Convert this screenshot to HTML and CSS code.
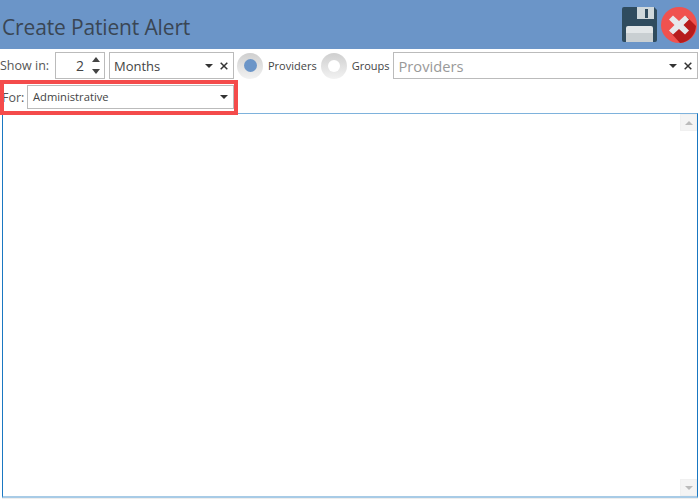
FILE: index.html
```html
<!DOCTYPE html>
<html lang="en">
<head>
<meta charset="utf-8">
<title>Create Patient Alert</title>
<link rel="stylesheet" href="styles.css">
</head>
<body>
<div class="app">
  <header class="header">
    <h1 class="title">Create Patient Alert</h1>
    <div class="actions">
      <svg class="save" width="35" height="35" viewBox="0 0 35 35">
        <path d="M2 0H32L35 3V33a2 2 0 0 1-2 2H2a2 2 0 0 1-2-2V2a2 2 0 0 1 2-2Z" fill="#2f4b5e"/>
        <path d="M15 0H32V12H15Z" fill="#cfd8dc"/>
        <rect x="23" y="2" width="3" height="9" fill="#2f4b5e"/>
        <path d="M4 21a2 2 0 0 1 2-2H29a2 2 0 0 1 2 2V35H4Z" fill="#e2e6e8"/>
        <rect x="4" y="26" width="27" height="9" fill="#c9cfd2"/>
      </svg>
      <svg class="close" width="36" height="36" viewBox="0 0 36 36">
        <circle cx="18" cy="18" r="18" fill="#f0524f"/>
        <path d="M10 26 L26 10 L35 19 A18 18 0 0 1 19 35.9Z" fill="#b71c1c"/>
        <path d="M12 8.5 L18 14 L24 8.5 L28 12.5 L22.5 18 L28 23.5 L24 27.5 L18 22 L12 27.5 L8 23.5 L13.5 18 L8 12.5Z" fill="#e6e9ec"/>
      </svg>
    </div>
  </header>

  <div class="row row-show">
    <span class="label">Show in:</span>
    <div class="field spinner">
      <span class="spin-value">2</span>
      <span class="spin-arrows">
        <svg width="8" height="5" viewBox="0 0 8 5"><path d="M4 0 8 5H0Z" fill="#444"/></svg>
        <svg width="8" height="5" viewBox="0 0 8 5"><path d="M0 0H8L4 5Z" fill="#444"/></svg>
      </span>
    </div>
    <div class="field combo months">
      <span class="combo-text">Months</span>
      <span class="caret"></span>
      <svg class="clear" width="8" height="8" viewBox="0 0 8 8"><path d="M.7.7 7.3 7.3M7.3.7.7 7.3" stroke="#333" stroke-width="1.5"/></svg>
    </div>
    <span class="radio radio-on"><span class="radio-dot"></span></span>
    <span class="radio-label">Providers</span>
    <span class="radio radio-off"><span class="radio-dot"></span></span>
    <span class="radio-label">Groups</span>
    <div class="field combo providers">
      <span class="combo-text placeholder">Providers</span>
      <span class="caret"></span>
      <svg class="clear" width="8" height="8" viewBox="0 0 8 8"><path d="M.7.7 7.3 7.3M7.3.7.7 7.3" stroke="#333" stroke-width="1.5"/></svg>
    </div>
  </div>

  <div class="row row-for">
    <span class="label">For:</span>
    <div class="field combo for">
      <span class="combo-text small">Administrative</span>
      <span class="caret"></span>
    </div>
    <span class="highlight"></span>
  </div>

  <div class="editor">
    <div class="scrollbar">
      <span class="scroll-btn"><span class="arrow-up"></span></span>
      <span class="scroll-btn"><span class="arrow-down"></span></span>
    </div>
  </div>
</div>
</body>
</html>
```

FILE: styles.css
```css
* { box-sizing: border-box; }
html, body { margin: 0; height: 100%; }
body { background: #fff; font-family: "Open Sans", "Liberation Sans", sans-serif; color: #444; overflow: hidden; }
.app { width: 699px; height: 500px; display: flex; flex-direction: column; background: #fff; }

.header { height: 49px; flex: none; background: #6b95c8; display: flex; align-items: center; justify-content: space-between; }
.title { margin: 4px 0 0 2px; font-family: "Open Sans", sans-serif; font-weight: 400; font-size: 21px; color: #3a4654; letter-spacing: -.15px; }
.actions { display: flex; align-items: center; margin-right: 2px; }
.save { display: block; margin-right: 4px; }
.close { display: block; margin-top: 1px; }

.row { display: flex; align-items: center; position: relative; }
.row-show { height: 27px; margin-top: 3px; padding-right: 1px; }
.row-for { height: 24px; margin-top: 6px; }

.label { font-size: 12.5px; color: #555; flex: none; }
.row-show .label { width: 55px; }
.row-for .label { width: 25px; margin-left: 2px; }

.field { border: 1px solid #bbb; background: #fff; display: flex; align-items: center; height: 100%; flex: none; }
.spinner { width: 50px; padding-right: 4px; justify-content: flex-end; }
.spin-value { font-size: 14px; color: #444; margin-right: 8px; }
.spin-arrows { display: flex; flex-direction: column; gap: 7px; }
.spin-arrows svg { display: block; }

.combo { padding: 0 4px 0 5px; }
.for { padding-bottom: 2px; }
.for .caret { margin-top: 2px; }
.combo-text { flex: 1; font-size: 13px; color: #444; }
.combo-text.small { font-size: 11.2px; }
.placeholder { font-size: 14.7px; color: #999; }
.caret { width: 0; height: 0; border: 4px solid transparent; border-top: 4px solid #333; border-bottom: 0; margin-right: 7px; }
.clear { display: block; margin-right: 1px; }
.months { width: 125px; margin-left: 4px; padding-left: 4px; }
.providers { flex: 1; margin-left: 3px; }
.for { width: 207px; }
.for .caret { margin-right: 1px; }

.radio { width: 26px; height: 26px; border-radius: 50%; background: linear-gradient(#cfcfcf, #f2f2f2); display: flex; align-items: center; justify-content: center; flex: none; }
.radio-on { margin-left: 3px; }
.radio-off { margin-left: 4px; }
.radio-dot { width: 13px; height: 13px; border-radius: 50%; background: #fff; }
.radio-off .radio-dot { width: 12px; height: 12px; }
.radio-on .radio-dot { background: #6b95c8; }
.radio-label { font-size: 11px; color: #444; margin-left: 5px; flex: none; }

.highlight { position: absolute; left: 0; top: -5px; width: 238px; height: 35px; border: 4px solid #f44b4b; pointer-events: none; }

.editor { margin: 4px 1px 0 2px; height: 385px; border: 1px solid #1a78c2; border-bottom: 2px solid #a8cbe6; border-top-color: #7eb2dc; box-shadow: 0 1px 0 #eee; flex: none; display: flex; justify-content: flex-end; }
.scrollbar { width: 17px; display: flex; flex-direction: column; justify-content: space-between; background: #fff; }
.scroll-btn { height: 17px; background: #f4f4f4; border: 1px solid #f0f0f0; display: flex; align-items: center; justify-content: center; }
.arrow-up { width: 0; height: 0; border: 4px solid transparent; border-bottom: 4px solid #bbb; border-top: 0; }
.arrow-down { width: 0; height: 0; border: 4px solid transparent; border-top: 4px solid #bbb; border-bottom: 0; }
```
